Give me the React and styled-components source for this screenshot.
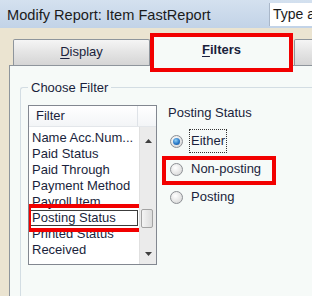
import styled, { createGlobalStyle } from "styled-components";

const GlobalStyle = createGlobalStyle`
  html, body {
    margin: 0;
    padding: 0;
  }
  body {
    font-family: "Liberation Sans", Arial, sans-serif;
  }
  * {
    box-sizing: border-box;
  }
`;

const Window = styled.div`
  width: 312px;
  height: 296px;
  overflow: hidden;
  display: flex;
  flex-direction: column;
  background: #ebe4d1;
`;

const TitleBar = styled.div`
  height: 28px;
  flex-shrink: 0;
  display: flex;
  align-items: center;
  background: linear-gradient(#d4e1ef, #c2d3e7);
`;

const Title = styled.div`
  padding-left: 7px;
  padding-top: 1px;
  font-size: 14.6px;
  color: #1b1b1b;
  white-space: nowrap;
`;

const SearchBox = styled.div`
  margin-left: auto;
  align-self: flex-start;
  margin-top: 3px;
  width: 43px;
  height: 23px;
  padding-left: 3px;
  background: #fff;
  border-left: 1px solid #a9b7c9;
  font-size: 14px;
  line-height: 23px;
  color: #1b1b1b;
  white-space: nowrap;
  overflow: hidden;
`;

const Body = styled.div`
  flex: 1;
  min-height: 0;
  display: flex;
  flex-direction: column;
  padding-left: 9px;
`;

const TabRow = styled.div`
  height: 37px;
  flex-shrink: 0;
  display: flex;
  align-items: flex-end;
  padding-left: 4px;
`;

const Tab = styled.div`
  position: relative;
  flex-shrink: 0;
  width: ${(p) => p.$width}px;
  height: ${(p) => (p.$active ? 33 : 26)}px;
  margin-bottom: ${(p) => (p.$active ? -1 : 0)}px;
  margin-left: ${(p) => p.$gap || 0}px;
  z-index: ${(p) => (p.$active ? 1 : 0)};
  border: 1px solid #8e959c;
  border-bottom: none;
  border-radius: 2px 2px 0 0;
  background: ${(p) =>
    p.$active ? "#f6faf8" : "linear-gradient(#f5f5f5, #e4e4e4 50%, #d5d5d5)"};
  padding-top: ${(p) => (p.$active ? 4 : 0)}px;
  font-size: 13px;
  font-weight: ${(p) => (p.$active ? 700 : 400)};
  line-height: 24px;
  text-align: center;
  color: #1a1f3c;
  u {
    text-decoration: underline;
    text-underline-offset: 2px;
  }
`;

const Highlight = styled.div`
  position: absolute;
  border: 4px solid #f20000;
  pointer-events: none;
  z-index: 2;
`;

const TabHighlight = styled(Highlight)`
  top: -1px;
  left: -1px;
  width: 143px;
  height: 39px;
`;

const Panel = styled.div`
  flex: 1;
  display: flex;
  flex-direction: column;
  padding-left: 10px;
  background: #f6faf8;
  border-top: 1px solid #8e959c;
  border-left: 1px solid #8e959c;
`;

const GroupBox = styled.fieldset`
  flex: 1;
  min-width: 0;
  margin: 14px 0 0 0;
  padding: 10px 0 0 7px;
  border: 1px solid #d3dde3;
  border-right: none;
  border-bottom: none;
  border-top-left-radius: 3px;
`;

const Legend = styled.legend`
  padding: 0 3px;
  font-size: 13px;
  line-height: 15px;
  color: #1a1f3c;
`;

const FilterRow = styled.div`
  display: flex;
  align-items: flex-start;
`;

const ListBox = styled.div`
  width: 129px;
  height: 160px;
  display: flex;
  flex-direction: column;
  background: #fff;
  border: 1px solid #828790;
`;

const ListHeader = styled.div`
  height: 21px;
  flex-shrink: 0;
  display: flex;
  background: linear-gradient(#ffffff, #f3f5f7);
  border-bottom: 1px solid #e3e6ea;
`;

const HeaderCell = styled.div`
  width: ${(p) => p.$width}px;
  padding-left: 7px;
  border-right: 1px solid #dfe3e8;
  font-size: 13px;
  line-height: 20px;
  color: #1a1f3c;
`;

const ListBody = styled.div`
  flex: 1;
  min-height: 0;
  display: flex;
`;

const Items = styled.div`
  flex: 1;
  padding: 3px 0 0 1px;
  overflow: hidden;
`;

const Item = styled.div`
  position: relative;
  width: 108px;
  height: 16px;
  padding-left: ${(p) => (p.$focused ? 1 : 2)}px;
  border: ${(p) => (p.$focused ? "1px solid #3c3c3c" : "none")};
  font-size: 13px;
  line-height: ${(p) => (p.$focused ? 14 : 16)}px;
  color: #1a1f3c;
  white-space: nowrap;
`;

const ItemHighlight = styled(Highlight)`
  top: -7px;
  left: -4px;
  width: 116px;
  height: 28px;
`;

const ScrollBar = styled.div`
  width: 17px;
  display: flex;
  flex-direction: column;
  background: #ebebeb;
  border-left: 1px solid #e0e0e0;
`;

const ArrowButton = styled.div`
  height: ${(p) => p.$height}px;
  flex-shrink: 0;
  display: flex;
  align-items: center;
  justify-content: center;
`;

const Track = styled.div`
  flex: 1;
  padding-top: ${(p) => p.$offset}px;
`;

const Thumb = styled.div`
  width: 12px;
  height: 19px;
  margin-left: 1px;
  border: 1px solid #a3a3a3;
  border-radius: 2px;
  background: linear-gradient(90deg, #f4f4f4, #dcdcdc);
`;

const RightCol = styled.div`
  margin-left: 11px;
  display: flex;
  flex-direction: column;
`;

const Caption = styled.div`
  font-size: 13px;
  line-height: 16px;
  color: #1a1f3c;
  margin-bottom: 6px;
`;

const RadioRow = styled.div`
  position: relative;
  height: 28px;
  display: flex;
  align-items: center;
  padding-left: 2px;
`;

const RadioCircle = styled.span`
  width: 13px;
  height: 13px;
  flex-shrink: 0;
  border-radius: 50%;
  border: 1px solid #8c8f94;
  background: radial-gradient(circle at 40% 35%, #ffffff, #e6e6e6 55%, #cfcfcf);
  display: flex;
  align-items: center;
  justify-content: center;
  &::after {
    content: "";
    display: ${(p) => (p.$checked ? "block" : "none")};
    width: 7px;
    height: 7px;
    border-radius: 50%;
    background: radial-gradient(circle at 40% 35%, #8fd0f7, #2a78c7 55%, #14508f);
  }
`;

const RadioLabel = styled.span`
  margin-left: 6px;
  padding: 0 1px;
  border: 1px dotted ${(p) => (p.$focused ? "#333" : "transparent")};
  font-size: 13px;
  line-height: 22px;
  color: #1a1f3c;
`;

const RadioHighlight = styled(Highlight)`
  top: 1px;
  left: -6px;
  width: 114px;
  height: 29px;
`;

const Triangle = ({ down }) => (
  <svg width="7" height="4" viewBox="0 0 7 4">
    <path d={down ? "M0 0H7L3.5 4Z" : "M0 4H7L3.5 0Z"} fill="#3f3f3f" />
  </svg>
);

const filters = [
  "Name Acc.Num...",
  "Paid Status",
  "Paid Through",
  "Payment Method",
  "Payroll Item",
  "Posting Status",
  "Printed Status",
  "Received",
];

const options = [
  { label: "Either", checked: true, focused: true },
  { label: "Non-posting", marked: true },
  { label: "Posting" },
];

export default function App() {
  return (
    <>
      <GlobalStyle />
      <Window>
        <TitleBar>
          <Title>Modify Report: Item FastReport</Title>
          <SearchBox>Type a</SearchBox>
        </TitleBar>
        <Body>
          <TabRow>
            <Tab $width={137}>
              <u>D</u>isplay
            </Tab>
            <Tab $width={143} $active>
              <u>F</u>ilters
              <TabHighlight />
            </Tab>
            <Tab $width={30} $gap={1} />
          </TabRow>
          <Panel>
            <GroupBox>
              <Legend>Choose Filter</Legend>
              <FilterRow>
                <ListBox>
                  <ListHeader>
                    <HeaderCell $width={109}>Filter</HeaderCell>
                  </ListHeader>
                  <ListBody>
                    <Items>
                      {filters.map((name) => (
                        <Item key={name} $focused={name === "Posting Status"}>
                          {name}
                          {name === "Posting Status" && <ItemHighlight />}
                        </Item>
                      ))}
                    </Items>
                    <ScrollBar>
                      <ArrowButton $height={27}>
                        <Triangle />
                      </ArrowButton>
                      <Track $offset={55}>
                        <Thumb />
                      </Track>
                      <ArrowButton $height={21}>
                        <Triangle down />
                      </ArrowButton>
                    </ScrollBar>
                  </ListBody>
                </ListBox>
                <RightCol>
                  <Caption>Posting Status</Caption>
                  {options.map((o) => (
                    <RadioRow key={o.label}>
                      <RadioCircle $checked={o.checked} />
                      <RadioLabel $focused={o.focused}>{o.label}</RadioLabel>
                      {o.marked && <RadioHighlight />}
                    </RadioRow>
                  ))}
                </RightCol>
              </FilterRow>
            </GroupBox>
          </Panel>
        </Body>
      </Window>
    </>
  );
}
